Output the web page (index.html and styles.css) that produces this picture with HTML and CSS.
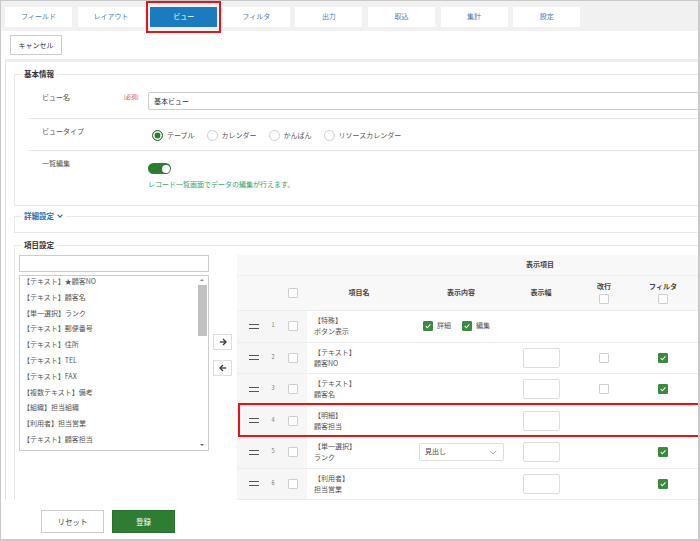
FILE: index.html
```html
<!DOCTYPE html>
<html lang="ja">
<head>
<meta charset="utf-8">
<title>ビュー設定</title>
<link rel="stylesheet" href="styles.css">
</head>
<body>
<div class="frame">
  <nav class="tabs">
    <div class="tab">フィールド</div>
    <div class="tab">レイアウト</div>
    <div class="tab active">ビュー</div>
    <div class="tab">フィルタ</div>
    <div class="tab">出力</div>
    <div class="tab">取込</div>
    <div class="tab">集計</div>
    <div class="tab">設定</div>
  </nav>
  <div class="toolbar"><button class="btn cancel">キャンセル</button></div>

  <main class="content">
    <fieldset class="fs fs-basic">
      <legend>基本情報</legend>
      <div class="rows">
        <div class="frow r1">
          <div class="flabel">ビュー名</div>
          <div class="req">[必須]</div>
          <div class="fctl"><div class="input">基本ビュー</div></div>
        </div>
        <div class="frow r2">
          <div class="flabel">ビュータイプ</div>
          <div class="req"></div>
          <div class="fctl radios">
            <div class="radio"><span class="rdot on"></span><span>テーブル</span></div>
            <div class="radio"><span class="rdot"></span><span>カレンダー</span></div>
            <div class="radio"><span class="rdot"></span><span>かんばん</span></div>
            <div class="radio"><span class="rdot"></span><span>リソースカレンダー</span></div>
          </div>
        </div>
        <div class="frow r3">
          <div class="flabel">一覧編集</div>
          <div class="req"></div>
          <div class="fctl">
            <div class="toggle"><span class="knob"></span></div>
            <div class="help">レコード一覧画面でデータの編集が行えます。</div>
          </div>
        </div>
      </div>
    </fieldset>

    <fieldset class="fs fs-detail">
      <legend class="link">詳細設定 <svg width="6" height="4" viewBox="0 0 6 4"><polyline points="0.6,0.6 3,3.2 5.4,0.6" fill="none" stroke="#2d6fb7" stroke-width="1.2"/></svg></legend>
    </fieldset>

    <fieldset class="fs fs-items">
      <legend>項目設定</legend>
      <div class="items-body">
        <div class="picker">
          <div class="search"></div>
          <div class="list">
            <ul>
              <li>【テキスト】★顧客NO</li>
              <li>【テキスト】顧客名</li>
              <li>【単一選択】ランク</li>
              <li>【テキスト】郵便番号</li>
              <li>【テキスト】住所</li>
              <li>【テキスト】TEL</li>
              <li>【テキスト】FAX</li>
              <li>【複数テキスト】備考</li>
              <li>【組織】担当組織</li>
              <li>【利用者】担当営業</li>
              <li>【テキスト】顧客担当</li>
            </ul>
            <div class="sbar">
              <span class="sarrow up"></span>
              <span class="thumb"></span>
              <span class="sfill"></span>
              <span class="sarrow down"></span>
            </div>
          </div>
        </div>

        <div class="movers">
          <button class="mv"><svg width="8" height="8" viewBox="0 0 8 8"><line x1="0.8" y1="4" x2="7" y2="4" stroke="#333" stroke-width="1.3"/><polyline points="4,1 7,4 4,7" fill="none" stroke="#333" stroke-width="1.3"/></svg></button>
          <button class="mv"><svg width="8" height="8" viewBox="0 0 8 8"><line x1="1" y1="4" x2="7.2" y2="4" stroke="#333" stroke-width="1.3"/><polyline points="4,1 1,4 4,7" fill="none" stroke="#333" stroke-width="1.3"/></svg></button>
        </div>

        <div class="tbl">
          <div class="trow th1">
            <div class="c head span3"></div>
            <div class="c head title">表示項目</div>
          </div>
          <div class="trow th2">
            <div class="c head"></div>
            <div class="c head"></div>
            <div class="c head ccb"><span class="cb"></span></div>
            <div class="c head hd">項目名</div>
            <div class="c head hd">表示内容</div>
            <div class="c head hd">表示幅</div>
            <div class="c head hd stack"><span>改行</span><span class="cb"></span></div>
            <div class="c head hd stack"><span>フィルタ</span><span class="cb"></span></div>
            <div class="c head"></div>
          </div>

          <div class="trow">
            <div class="c side grip-c"><span class="grip"></span></div>
            <div class="c side num">1</div>
            <div class="c side ccb"><span class="cb"></span></div>
            <div class="c name"><span>【特殊】</span><span>ボタン表示</span></div>
            <div class="c disp">
              <span class="cb on"><svg width="8" height="8" viewBox="0 0 10 10"><polyline points="2.2,5.2 4.2,7.2 8,3" fill="none" stroke="#fff" stroke-width="1.3"/></svg></span><span>詳細</span>
              <span class="cb on"><svg width="8" height="8" viewBox="0 0 10 10"><polyline points="2.2,5.2 4.2,7.2 8,3" fill="none" stroke="#fff" stroke-width="1.3"/></svg></span><span>編集</span>
            </div>
            <div class="c mid"></div>
            <div class="c mid"></div>
            <div class="c mid"></div>
            <div class="c"></div>
          </div>

          <div class="trow">
            <div class="c side grip-c"><span class="grip"></span></div>
            <div class="c side num">2</div>
            <div class="c side ccb"><span class="cb"></span></div>
            <div class="c name"><span>【テキスト】</span><span>顧客NO</span></div>
            <div class="c disp"></div>
            <div class="c mid"><span class="winput"></span></div>
            <div class="c mid"><span class="cb"></span></div>
            <div class="c mid"><span class="cb on"><svg width="8" height="8" viewBox="0 0 10 10"><polyline points="2.2,5.2 4.2,7.2 8,3" fill="none" stroke="#fff" stroke-width="1.3"/></svg></span></div>
            <div class="c"></div>
          </div>

          <div class="trow">
            <div class="c side grip-c"><span class="grip"></span></div>
            <div class="c side num">3</div>
            <div class="c side ccb"><span class="cb"></span></div>
            <div class="c name"><span>【テキスト】</span><span>顧客名</span></div>
            <div class="c disp"></div>
            <div class="c mid"><span class="winput"></span></div>
            <div class="c mid"><span class="cb"></span></div>
            <div class="c mid"><span class="cb on"><svg width="8" height="8" viewBox="0 0 10 10"><polyline points="2.2,5.2 4.2,7.2 8,3" fill="none" stroke="#fff" stroke-width="1.3"/></svg></span></div>
            <div class="c"></div>
          </div>

          <div class="trow hl">
            <div class="c side grip-c"><span class="grip"></span></div>
            <div class="c side num">4</div>
            <div class="c side ccb"><span class="cb"></span></div>
            <div class="c name"><span>【明細】</span><span>顧客担当</span></div>
            <div class="c disp"></div>
            <div class="c mid"><span class="winput"></span></div>
            <div class="c mid"></div>
            <div class="c mid"></div>
            <div class="c"></div>
          </div>

          <div class="trow">
            <div class="c side grip-c"><span class="grip"></span></div>
            <div class="c side num">5</div>
            <div class="c side ccb"><span class="cb"></span></div>
            <div class="c name"><span>【単一選択】</span><span>ランク</span></div>
            <div class="c disp"><div class="select"><span>見出し</span><svg width="8" height="5" viewBox="0 0 8 5"><polyline points="0.6,0.6 4,4 7.4,0.6" fill="none" stroke="#bbb" stroke-width="1"/></svg></div></div>
            <div class="c mid"><span class="winput"></span></div>
            <div class="c mid"></div>
            <div class="c mid"><span class="cb on"><svg width="8" height="8" viewBox="0 0 10 10"><polyline points="2.2,5.2 4.2,7.2 8,3" fill="none" stroke="#fff" stroke-width="1.3"/></svg></span></div>
            <div class="c"></div>
          </div>

          <div class="trow">
            <div class="c side grip-c"><span class="grip"></span></div>
            <div class="c side num">6</div>
            <div class="c side ccb"><span class="cb"></span></div>
            <div class="c name"><span>【利用者】</span><span>担当営業</span></div>
            <div class="c disp"></div>
            <div class="c mid"><span class="winput"></span></div>
            <div class="c mid"></div>
            <div class="c mid"><span class="cb on"><svg width="8" height="8" viewBox="0 0 10 10"><polyline points="2.2,5.2 4.2,7.2 8,3" fill="none" stroke="#fff" stroke-width="1.3"/></svg></span></div>
            <div class="c"></div>
          </div>
        </div>
      </div>
    </fieldset>
  </main>

  <footer class="footer">
    <button class="btn reset">リセット</button>
    <button class="btn primary">登録</button>
  </footer>
</div>
</body>
</html>
```

FILE: styles.css
```css
* { box-sizing: border-box; }
html, body { margin: 0; padding: 0; background: #fff; }
body {
  font-family: "Noto Sans CJK JP", "Noto Sans", sans-serif;
  font-size: 7px;
  color: #444;
  line-height: 1.4;
}

.frame {
  width: 700px;
  height: 541px;
  border-style: solid;
  border-color: #c9c9c9;
  border-width: 1px 2px 2px 1px;
  overflow: hidden;
  display: flex;
  flex-direction: column;
  background: #fff;
}

/* tabs */
.tabs {
  flex: none;
  height: 30px;
  display: flex;
  gap: 5.6px;
  padding: 6px 0 4px 4px;
  background: #f1f1f1;
}
.tab {
  flex: none;
  width: 67px;
  height: 20px;
  background: #fff;
  color: #4a7bbf;
  display: flex;
  align-items: center;
  justify-content: center;
  position: relative;
}
.tab.active { background: #1a7bc0; color: #fff; }
.tab.active::after {
  content: "";
  position: absolute;
  left: -4px; right: -4px; top: -6px; bottom: -6px;
  border: 2px solid #e5141b;
  z-index: 3;
}

/* toolbar */
.toolbar { flex: none; height: 28px; padding: 4px 0 0 9px; }
.btn {
  font-family: inherit;
  font-size: 7px;
  padding: 0;
  margin: 0;
  cursor: pointer;
}
.cancel {
  width: 52px;
  height: 20px;
  border: 1px solid #cccccc;
  background: #fff;
  color: #333;
}

/* content panel */
.content {
  flex: 1;
  min-height: 0;
  overflow: hidden;
  align-self: flex-start;
  width: 790px;
  margin-left: 4px;
  border-left: 1px solid #e3e3e3;
  border-top: 3px solid #eeeeee;
  padding: 7px 0 0 8px;
}

.fs {
  margin: 0;
  padding: 0;
  border: 1px solid #e8e8e8;
  min-width: 0;
  width: 770px;
}
.fs legend {
  padding: 0 3px;
  margin-left: 6px;
  line-height: 10px;
  font-size: 7.5px;
  font-weight: bold;
  color: #333;
}
.fs legend.link {
  color: #2d6fb7;
  display: flex;
  align-items: center;
  gap: 3px;
}

.fs-basic .rows { padding: 5px 0 5px 13px; }
.fs-detail { margin-top: 5px; padding-bottom: 11px; }
.fs-items { margin-top: 7px; height: 400px; }

/* basic rows */
.frow {
  display: grid;
  grid-template-columns: 82px 24px 1fr;
  align-items: start;
  padding: 7px 0 9px 14px;
  border-bottom: 1px solid #e8e8e8;
}
.frow.r1 { padding: 8px 0 8px 14px; }
.frow.r3 { border-bottom: 0; padding: 7px 0 11px 14px; }
.flabel { line-height: 10px; color: #555; }
.req { line-height: 10px; color: #d0453c; font-size: 5.5px; }
.input {
  width: 600px;
  height: 18px;
  border: 1px solid #cccccc;
  border-radius: 2px;
  padding: 0 5px;
  line-height: 16px;
  color: #333;
}
.radios {
  display: flex;
  gap: 12px;
  padding-left: 4px;
  margin-top: 3px;
}
.radio { display: flex; align-items: center; gap: 4px; color: #555; line-height: 12px; }
.rdot {
  width: 11px;
  height: 11px;
  border-radius: 50%;
  border: 1px solid #cfcfcf;
  background: #fff;
}
.rdot.on {
  border-color: #2e7d32;
  background: #2e7d32;
  box-shadow: inset 0 0 0 1.6px #fff;
}
.toggle {
  margin-top: 5px;
  width: 23px;
  height: 11px;
  border-radius: 6px;
  background: #2e7d32;
  display: flex;
  justify-content: flex-end;
  align-items: center;
  padding: 0 1.5px;
}
.knob { width: 8px; height: 8px; border-radius: 50%; background: #fff; }
.help { margin-top: 5px; line-height: 10px; color: #3aa469; }

/* items */
.items-body { display: flex; align-items: flex-start; padding: 5px 0 0 4px; }
.picker {
  flex: none;
  width: 190px;
  display: flex;
  flex-direction: column;
  gap: 3px;
}
.search { height: 17px; border: 1px solid #cccccc; background: #fff; }
.list {
  height: 176px;
  border: 1px solid #cccccc;
  display: flex;
  overflow: hidden;
}
.list ul {
  list-style: none;
  margin: -2px 0 0 0;
  padding: 0 0 0 3px;
  flex: 1;
  overflow: hidden;
}
.list li { line-height: 15.8px; white-space: nowrap; color: #555; }
.sbar {
  flex: none;
  width: 10px;
  margin-right: 1px;
  display: flex;
  flex-direction: column;
  align-items: center;
}
.sarrow {
  width: 0; height: 0;
  border-left: 2px solid transparent;
  border-right: 2px solid transparent;
}
.sarrow.up { border-bottom: 2.5px solid #888; margin: 3px 0 3.5px; }
.sarrow.down { border-top: 2.5px solid #666; margin: 0 0 4px; }
.thumb { width: 9px; height: 51px; background: #c1c1c1; }
.sfill { flex: 1; }

.movers {
  flex: none;
  width: 19px;
  margin: 79px 5px 0 4px;
  display: flex;
  flex-direction: column;
  gap: 10px;
}
.mv {
  height: 16px;
  border: 1px solid #dddddd;
  background: #fff;
  display: flex;
  align-items: center;
  justify-content: center;
  padding: 0;
}

.tbl { flex: none; width: 536px; }
.trow {
  display: grid;
  grid-template-columns: 28px 16px 26px 104px 100px 60px 66px 52px 84px;
  grid-auto-rows: 31.5px;
  position: relative;
}
.trow.th1 { grid-auto-rows: 21px; }
.trow.th2 { grid-auto-rows: 35px; }
.c {
  border-bottom: 1px solid #ededed;
  display: flex;
  align-items: center;
  min-width: 0;
}
.head { background: #f8f8f8; }
.side { background: #f6f6f6; }
.span3 { grid-column: 1 / span 3; }
.title {
  grid-column: 4 / span 6;
  justify-content: center;
  font-weight: bold;
  color: #444;
}
.hd { justify-content: center; font-weight: bold; color: #444; }
.stack { flex-direction: column; gap: 3px; font-weight: bold; }
.stack span:first-child { line-height: 9px; }

.grip-c { padding-left: 12px; }
.grip {
  width: 10px;
  height: 5px;
  border-top: 1.6px solid #555;
  border-bottom: 1.6px solid #555;
}
.num { justify-content: center; font-size: 5.5px; color: #777; }
.ccb { justify-content: center; padding-right: 3px; }
.cb {
  width: 10px;
  height: 10px;
  border: 1px solid #cfcfcf;
  border-radius: 1px;
  background: #fff;
  display: inline-flex;
  align-items: center;
  justify-content: center;
  flex: none;
}
.cb.on { background: #3b8b3f; border-color: #3b8b3f; }

.name {
  flex-direction: column;
  align-items: flex-start;
  justify-content: center;
  padding-left: 7px;
  line-height: 11px;
  color: #555;
}
.disp { padding-left: 12px; gap: 4px; color: #555; }
.disp .cb + span { margin-right: 7px; }
.mid { justify-content: center; }
.winput {
  width: 37px;
  height: 20px;
  border: 1px solid #dddddd;
  border-radius: 2px;
  background: #fff;
}
.select {
  margin-left: -4px;
  width: 85px;
  height: 18px;
  border: 1px solid #dddddd;
  border-radius: 2px;
  display: flex;
  align-items: center;
  justify-content: space-between;
  padding: 0 6px 0 5px;
  color: #444;
}

.trow.hl::after {
  content: "";
  position: absolute;
  left: 1px;
  top: -2.5px;
  width: 460px;
  bottom: 0;
  border: 2px solid #e5141b;
  z-index: 3;
}

/* footer */
.footer {
  flex: none;
  height: 39px;
  display: flex;
  gap: 8px;
  padding: 10px 0 0 40px;
  background: #fff;
}
.reset, .primary { width: 63px; height: 23px; font-size: 7.5px; }
.reset { border: 1px solid #cccccc; background: #fff; color: #444; }
.primary { border: 1px solid #2a7030; background: #2e7d32; color: #fff; }
```
